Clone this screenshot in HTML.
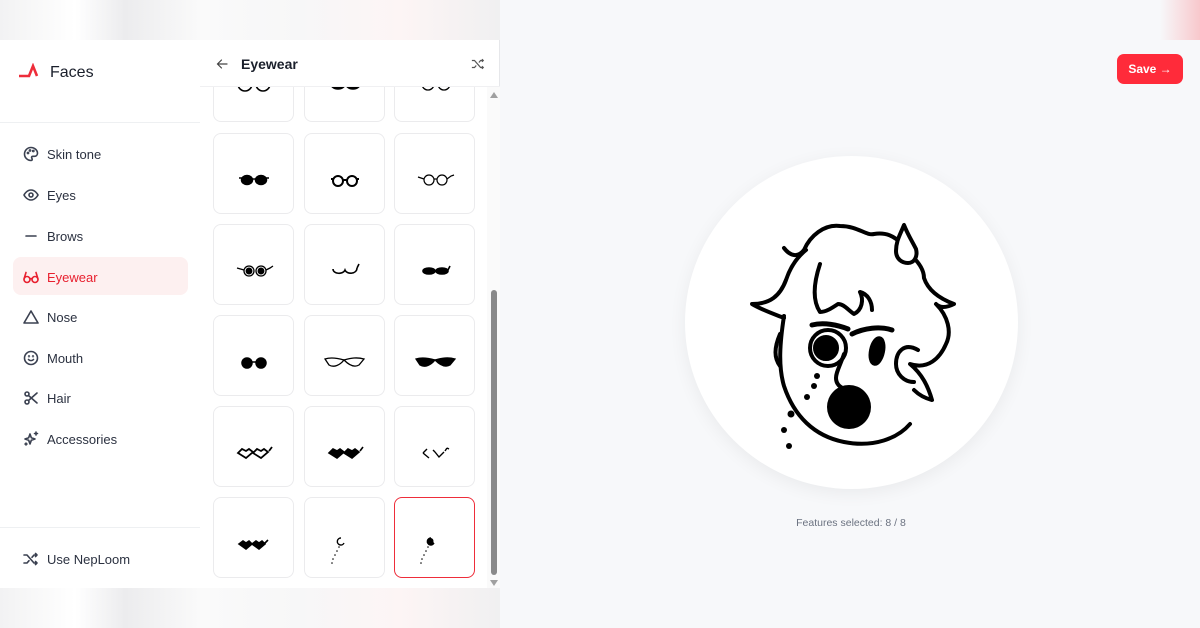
<!DOCTYPE html>
<html><head><meta charset="utf-8"><style>
*{margin:0;padding:0;box-sizing:border-box}
body{width:1200px;height:628px;overflow:hidden;background:#f7f8fa;font-family:"Liberation Sans",sans-serif;position:relative;color:#1f2430}
.band{position:absolute;left:0;width:500px;height:40px;background:linear-gradient(90deg,#f2f2f3,#fff 15%,#ececee 25%,#fafafa 40%,#f7f7f8 60%,#fdf5f5 80%,#f0f0f1)}
#panel{position:absolute;left:0;top:40px;width:500px;height:548px;background:#fff;border-right:1px solid #e6e7ea}
.abs{position:absolute}
.nav{position:absolute;left:23px;font-size:13px;color:#2b3140;display:flex;align-items:center}
.nav svg{width:16px;height:16px;margin-right:8px;fill:none;stroke:#3a4050;stroke-width:1.6;stroke-linecap:round;stroke-linejoin:round}
.cell{position:absolute;width:81px;height:81px;border:1px solid #ebebed;border-radius:8px;background:#fff}
.cell svg{position:absolute;left:0;top:0}
</style></head><body>
<div class="band" style="top:0"></div>
<div class="band" style="top:588px"></div>
<div class="abs" style="left:1160px;top:0;width:40px;height:40px;background:linear-gradient(90deg,#f7f8fa,#f8c8cc)"></div>
<div id="panel">
 <svg class="abs" style="left:18px;top:23px" width="24" height="16" viewBox="0 0 24 16"><path d="M1 13H11L15 3L19 13" fill="none" stroke="#ee2d3a" stroke-width="2.6" stroke-linejoin="miter"/></svg>
 <div class="abs" style="left:50px;top:24px;font-size:16px;color:#1a1f2b">Faces</div>
 <div class="abs" style="left:0;top:82px;width:200px;height:1px;background:#eef0f2"></div>
 <div class="abs" style="left:0;top:487px;width:200px;height:1px;background:#eef0f2"></div>
 <div class="abs" style="left:13px;top:217px;width:175px;height:38px;background:#fdf0f0;border-radius:8px"></div>
 <div class="nav" style="top:106px"><svg viewBox="0 0 16 16"><path d="M8 1.5C4.4 1.5 1.5 4.4 1.5 8s2.9 6.5 6.5 6.5c.8 0 1.2-.6 1.2-1.2 0-.8-.6-1-.6-1.8 0-.7.6-1.2 1.3-1.2h1.6c1.7 0 3-1.3 3-3 0-3.1-2.9-5.8-6.5-5.8z"/><circle cx="5" cy="7" r=".6"/><circle cx="7" cy="4.5" r=".6"/><circle cx="10.3" cy="5" r=".6"/></svg>Skin tone</div>
 <div class="nav" style="top:147px"><svg viewBox="0 0 16 16"><path d="M1 8s2.5-5 7-5 7 5 7 5-2.5 5-7 5-7-5-7-5z"/><circle cx="8" cy="8" r="2"/></svg>Eyes</div>
 <div class="nav" style="top:188px"><svg viewBox="0 0 16 16"><path d="M3 8h10"/></svg>Brows</div>
 <div class="nav" style="top:229px;color:#e8202f"><svg viewBox="0 0 16 16" style="stroke:#e8202f"><circle cx="4" cy="10.5" r="3"/><circle cx="12" cy="10.5" r="3"/><path d="M7 10c.6-.5 1.4-.5 2 0M1 10L3 3.5M15 10L13 3.5"/></svg>Eyewear</div>
 <div class="nav" style="top:269px"><svg viewBox="0 0 16 16"><path d="M8 2L15 14H1Z"/></svg>Nose</div>
 <div class="nav" style="top:310px"><svg viewBox="0 0 16 16"><circle cx="8" cy="8" r="6.5"/><path d="M5.5 9.5c1.3 1.5 3.7 1.5 5 0"/><circle cx="6" cy="6.3" r=".4"/><circle cx="10" cy="6.3" r=".4"/></svg>Mouth</div>
 <div class="nav" style="top:350px"><svg viewBox="0 0 16 16"><circle cx="4" cy="4" r="2"/><circle cx="4" cy="12" r="2"/><path d="M5.5 5.5L14 13M5.5 10.5L14 3"/></svg>Hair</div>
 <div class="nav" style="top:391px"><svg viewBox="0 0 16 16"><path d="M7 3l1.3 3.7L12 8l-3.7 1.3L7 13l-1.3-3.7L2 8l3.7-1.3z"/><path d="M13 1v3M11.5 2.5h3M3 12v2M2 13h2"/></svg>Accessories</div>
 <div class="nav" style="top:511px"><svg viewBox="0 0 16 16"><path d="M1 4h3l7 8h3M1 12h3l2-2.3M9 6.3L11 4h3M12.5 2.5L14 4l-1.5 1.5M12.5 10.5L14 12l-1.5 1.5"/></svg>Use NepLoom</div>

 <svg class="abs" style="left:216px;top:18px" width="12" height="12" viewBox="0 0 12 12"><path d="M11 6H1.5M5.5 2L1.5 6l4 4" fill="none" stroke="#444" stroke-width="1.2" stroke-linecap="round"/></svg>
 <div class="abs" style="left:241px;top:16px;font-size:14px;font-weight:bold;color:#1a1f2b">Eyewear</div>
 <svg class="abs" style="left:471px;top:17px" width="14" height="14" viewBox="0 0 16 16"><path d="M1 4h3l7 8h3M1 12h3l2-2.3M9 6.3L11 4h3M12.5 2.5L14 4l-1.5 1.5M12.5 10.5L14 12l-1.5 1.5" fill="none" stroke="#555" stroke-width="1.4"/></svg>
 <div class="abs" style="left:200px;top:46px;width:300px;height:1px;background:#f0f0f2"></div>
 <div class="abs" style="left:200px;top:47px;width:287px;height:501px;overflow:hidden">
  <div class="cell" style="left:13px;top:-46px"><svg width="81" height="81"><g fill="none" stroke="#000" stroke-width="1.6"><path d="M24 42a7 7 0 0 0 14 0M42 42a7 7 0 0 0 14 0"/></g></svg></div>
  <div class="cell" style="left:104px;top:-46px"><svg width="81" height="81"><g stroke="#000" stroke-width="1.5" fill="#000"><ellipse cx="33" cy="42" rx="7" ry="5"/><ellipse cx="48" cy="42" rx="7" ry="5"/></g></svg></div>
  <div class="cell" style="left:194px;top:-46px"><svg width="81" height="81"><g fill="none" stroke="#000" stroke-width="1.3"><path d="M27 42a6 6 0 0 0 12 0M43 42a6 6 0 0 0 12 0"/></g></svg></div>

  <div class="cell" style="left:13px;top:46px"><svg width="81" height="81"><g stroke="#000" stroke-width="1.5"><ellipse cx="33" cy="46" rx="5.5" ry="4.5"/><ellipse cx="47" cy="46" rx="5.5" ry="4.5"/><path d="M38 45h4M25 44h3M52 44h3"/></g></svg></div>
  <div class="cell" style="left:104px;top:46px"><svg width="81" height="81"><g fill="none" stroke="#000" stroke-width="2"><circle cx="33" cy="47" r="5"/><circle cx="47" cy="47" r="5"/><path d="M38 46h4M26 45h2M52 45h2"/></g></svg></div>
  <div class="cell" style="left:194px;top:46px"><svg width="81" height="81"><g fill="none" stroke="#000" stroke-width="1.2"><circle cx="34" cy="46" r="5"/><circle cx="47" cy="46" r="5"/><path d="M39 45h3M29 45l-6-2M52 45l4-3 3-1"/></g></svg></div>

  <div class="cell" style="left:13px;top:137px"><svg width="81" height="81"><g stroke="#000" stroke-width="1.3" fill="none"><circle cx="35" cy="46" r="5"/><circle cx="47" cy="46" r="5"/><circle cx="35" cy="46" r="2.8" fill="#000"/><circle cx="47" cy="46" r="2.8" fill="#000"/><path d="M30 45l-7-2M52 45l4-2 3-2"/></g></svg></div>
  <div class="cell" style="left:104px;top:137px"><svg width="81" height="81"><g stroke="#000" stroke-width="1.6" fill="none"><path d="M28 44c0 5 10 6 12 1c2 5 12 4 12-2M52 43l2-4"/></g></svg></div>
  <div class="cell" style="left:194px;top:137px"><svg width="81" height="81"><g stroke="#000" stroke-width="1.6" fill="#000"><ellipse cx="34" cy="46" rx="6" ry="3"/><ellipse cx="47" cy="46" rx="6" ry="3"/><path d="M53 45l2-4" fill="none"/></g></svg></div>

  <div class="cell" style="left:13px;top:228px"><svg width="81" height="81"><g stroke="#000" stroke-width="1.5" fill="#000"><circle cx="33" cy="47" r="5"/><circle cx="47" cy="47" r="5"/><path d="M38 46h4"/></g></svg></div>
  <div class="cell" style="left:104px;top:228px"><svg width="81" height="81"><g stroke="#000" stroke-width="1.3" fill="none"><path d="M20 43c6-2 12-1 19 1c7-2 13-3 20-1l-5 6c-5 3-10 0-15-5c-4 5-10 8-15 5z"/></g></svg></div>
  <div class="cell" style="left:194px;top:228px"><svg width="81" height="81"><g stroke="#000" stroke-width="1.3" fill="#000"><path d="M21 43c6-2 12-1 19 1c7-2 13-3 20-1l-5 6c-5 3-10 0-15-5c-4 5-10 8-15 5z"/></g></svg></div>

  <div class="cell" style="left:13px;top:319px"><svg width="81" height="81"><g stroke="#000" stroke-width="1.8" fill="none"><path d="M24 46l4-4 4 2 3-2 4 3-7 6zM39 46l4-4 4 2 3-2 4 3-7 6zM55 44l3-4"/></g></svg></div>
  <div class="cell" style="left:104px;top:319px"><svg width="81" height="81"><g stroke="#000" stroke-width="1.6" fill="#000"><path d="M24 46l4-4 4 2 3-2 4 3-7 6zM39 46l4-4 4 2 3-2 4 3-7 6zM55 44l3-4"/></g></svg></div>
  <div class="cell" style="left:194px;top:319px"><svg width="81" height="81"><g stroke="#000" stroke-width="1.4" fill="none"><path d="M28 46l4-4M28 46l6 5M40 45l-2-2M40 45l4 5 5-5M50 44l2-3M52 41l2 1"/></g></svg></div>

  <div class="cell" style="left:13px;top:410px"><svg width="81" height="81"><g stroke="#000" stroke-width="1.6" fill="#000"><path d="M25 46l4-3 3 2 3-2 3 3-6 5zM38 46l4-3 3 2 3-2 3 3-6 5zM51 45l3-3"/></g></svg></div>
  <div class="cell" style="left:104px;top:410px"><svg width="81" height="81"><g stroke="#000" fill="none"><path d="M36 40a3.5 3.5 0 1 0 3 5" stroke-width="1.4"/></g><g fill="#000"><circle cx="34" cy="49" r=".8"/><circle cx="32" cy="53" r=".8"/><circle cx="30" cy="57" r=".8"/><circle cx="28" cy="61" r=".8"/><circle cx="27" cy="65" r=".8"/></g></svg></div>
  <div class="cell" style="left:194px;top:410px;border:1.5px solid #ee2d3a"><svg width="81" height="81"><g stroke="#000" fill="#000"><path d="M36 40a3.5 3.5 0 1 0 3 5" stroke-width="1.4"/><circle cx="35.5" cy="43" r="2.5"/></g><g fill="#000"><circle cx="33" cy="49" r=".8"/><circle cx="31" cy="53" r=".8"/><circle cx="29" cy="57" r=".8"/><circle cx="27" cy="61" r=".8"/><circle cx="26" cy="65" r=".8"/></g></svg></div>
 </div>
 <div class="abs" style="left:487px;top:47px;width:13px;height:501px;background:#fafafa"></div>
 <div class="abs" style="left:490px;top:52px;width:0;height:0;border-left:4px solid transparent;border-right:4px solid transparent;border-bottom:6px solid #a0a0a0"></div>
 <div class="abs" style="left:490px;top:540px;width:0;height:0;border-left:4px solid transparent;border-right:4px solid transparent;border-top:6px solid #a0a0a0"></div>
 <div class="abs" style="left:491px;top:250px;width:6px;height:285px;background:#8a8a8a;border-radius:3px"></div>
</div>

<div class="abs" style="left:1117px;top:54px;width:66px;height:30px;background:#ff2b3a;border-radius:7px;color:#fff;font-size:12px;font-weight:bold;text-align:center;line-height:30px">Save →</div>

<div class="abs" style="left:685px;top:156px;width:333px;height:333px;border-radius:50%;background:#fff;box-shadow:0 4px 18px rgba(0,0,0,.06)"></div>
<svg class="abs" style="left:680px;top:150px" width="340" height="340" viewBox="0 0 340 340" fill="none" stroke="#000" stroke-width="4" stroke-linecap="round" stroke-linejoin="round">
 <path d="M104 98c6 8 14 10 20 2c6-14 20-26 36-24c18 0 26 10 34 8c12-2 20 2 28 10"/>
 <path d="M222 98c14 10 22 20 22 30c4 12 14 20 30 26c-8 4-14 4-18 0c12 12 16 28 10 40c-6 14-18 26-36 20c12 10 18 22 22 36c-8 -2-14-6-18-10"/>
 <path d="M126 100c-10 8-16 18-20 30c-6 16-16 24-34 24c10 6 22 10 32 14"/>
 <path d="M140 114c-6 18-8 36 0 48c6 0 12-4 18-8c6 0 10 6 16 10c8-4 10-14 6-22c8 2 12 10 12 18"/>
 <path d="M104 166c-4 26-6 50 0 70c10 30 30 50 60 56c30 6 54-4 66-18"/>
 <path d="M100 184c-6 14-6 24 0 32"/>
 <path d="M238 200c-14-8-22 2-22 14c0 10 8 18 18 18"/>
 <path d="M224 75c-4 10-8 16-8 26c0 8 6 12 12 12c6 0 10-6 8-14c-4-8-8-14-12-24z" fill="#fff"/>
 <path d="M132 175c12-3 26 0 36 4M172 184c12-6 28-8 40-4" stroke-width="5"/>
 <ellipse cx="197" cy="201" rx="6" ry="13" fill="#000" transform="rotate(12 197 201)"/>
 <circle cx="148" cy="198" r="18"/>
 <circle cx="146" cy="198" r="11" fill="#000"/>
 <path d="M164 204c-4 12-8 18-8 24c0 6 4 10 12 12"/>
 <ellipse cx="169" cy="257" rx="22" ry="22" fill="#000" stroke="none"/>
 <g fill="#000" stroke="none"><circle cx="137" cy="226" r="3"/><circle cx="134" cy="236" r="3"/><circle cx="127" cy="247" r="3"/><circle cx="111" cy="264" r="3.5"/><circle cx="104" cy="280" r="3"/><circle cx="109" cy="296" r="3"/></g>
</svg>
<div class="abs" style="left:751px;top:517px;width:200px;text-align:center;font-size:10.5px;color:#6b7280">Features selected: 8 / 8</div>
</body></html>
